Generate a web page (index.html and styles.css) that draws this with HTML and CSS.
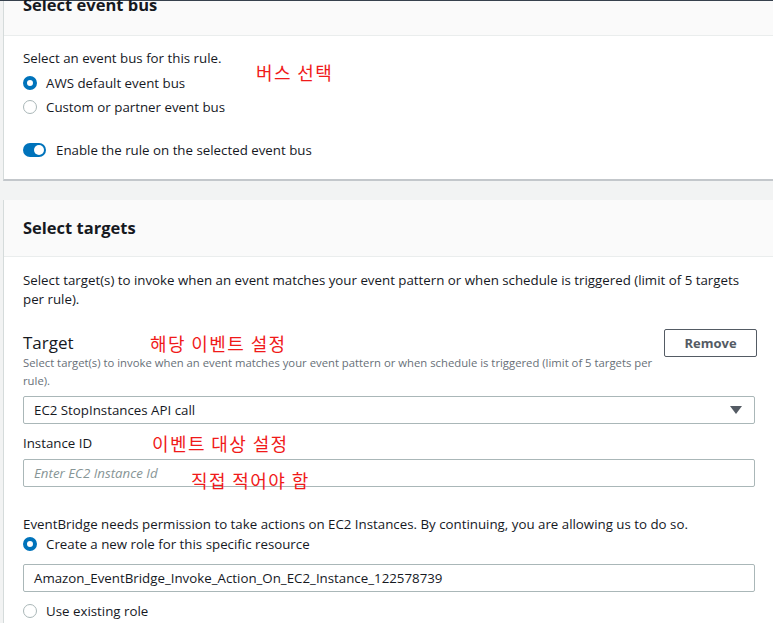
FILE: index.html
```html
<!DOCTYPE html>
<html lang="en">
<head>
    <meta charset="UTF-8">
    <title>Select event bus / Select targets</title>
    <link rel="stylesheet" href="styles.css">
</head>
<body>
    <div class="topline"></div>
    <div class="page">
        <div class="card card-bus">
            <div class="card-header">
                <h2>Select event bus</h2>
            </div>
            <div class="card-body bus-body">
                <p class="text">Select an event bus for this rule.</p>
                <div class="radio-group">
                    <label class="radio-row"><span class="radio checked"></span>AWS default event bus</label>
                    <label class="radio-row"><span class="radio"></span>Custom or partner event bus</label>
                </div>
                <label class="toggle-row"><span class="toggle"><span class="knob"></span></span>Enable the rule on the selected event bus</label>
                <span class="note note-bus">버스 선택</span>
            </div>
        </div>

        <div class="card card-targets">
            <div class="card-header">
                <h2>Select targets</h2>
            </div>
            <div class="card-body targets-body">
                <p class="text desc">Select target(s) to invoke when an event matches your event pattern or when schedule is triggered (limit of 5 targets per rule).</p>

                <div class="target-head">
                    <div class="target-title">
                        <h3>Target</h3>
                        <p class="small">Select target(s) to invoke when an event matches your event pattern or when schedule is triggered (limit of 5 targets per rule).</p>
                    </div>
                    <button class="btn">Remove</button>
                    <span class="note note-target">해당 이벤트 설정</span>
                </div>

                <div class="select">
                    <span>EC2 StopInstances API call</span>
                    <svg class="caret" width="12" height="8" viewBox="0 0 12 8"><polygon points="0,0 12,0 6,8" fill="#545b64"/></svg>
                </div>

                <div class="field">
                    <label class="label">Instance ID</label>
                    <span class="note note-instance">이벤트 대상 설정</span>
                </div>
                <div class="input placeholder">
                    Enter EC2 Instance Id
                    <span class="note note-input">직접 적어야 함</span>
                </div>

                <p class="text perm">EventBridge needs permission to take actions on EC2 Instances. By continuing, you are allowing us to do so.</p>
                <label class="radio-row"><span class="radio checked"></span>Create a new role for this specific resource</label>
                <div class="input role">Amazon_EventBridge_Invoke_Action_On_EC2_Instance_122578739</div>
                <label class="radio-row last"><span class="radio"></span>Use existing role</label>
            </div>
        </div>
    </div>
</body>
</html>
```

FILE: styles.css
```css
body {
    margin: 0;
    background-color: #f2f3f3;
    font-family: "Open Sans", "Noto Sans", sans-serif;
    font-size: 13.3px;
    color: #16191f;
    overflow: hidden;
}

.topline {
    height: 1px;
    background-color: #37414d;
}

.page {
    padding-left: 3px;
    margin-right: -1px;
}

.card {
    background-color: #fff;
    border-left: 1px solid #d5dbdb;
    border-bottom: 2px solid #c3c7cb;
}

.card-header {
    background-color: #fafafa;
    border-bottom: 1px solid #eaeded;
    padding: 0 19px;
    display: flow-root;
}

.card-header h2 {
    margin: 0;
    font-size: 16.5px;
    font-weight: 700;
    line-height: 22px;
}

.card-bus .card-header {
    height: 34px;
}

.card-bus .card-header h2 {
    margin-top: -7px;
}

.card-targets {
    margin-top: 19px;
}

.card-targets .card-header {
    height: 56px;
    display: flex;
    align-items: center;
}

.card-body {
    position: relative;
    padding: 0 19px;
}

.text {
    margin: 0;
    line-height: 20px;
}

.bus-body {
    padding-top: 12px;
    padding-bottom: 18px;
}

.radio-group {
    margin-top: 3px;
}

.radio-row {
    display: flex;
    align-items: center;
    height: 24px;
}

.radio {
    width: 14px;
    height: 14px;
    box-sizing: border-box;
    border: 1.5px solid #aab7b8;
    border-radius: 50%;
    margin-right: 9px;
    background-color: #fff;
}

.radio.checked {
    border: 4px solid #0073bb;
}

.toggle-row {
    display: flex;
    align-items: center;
    height: 22px;
    margin-top: 20px;
}

.toggle {
    width: 23px;
    height: 14px;
    border-radius: 7px;
    background-color: #0073bb;
    margin-right: 10px;
    position: relative;
}

.knob {
    position: absolute;
    right: 2px;
    top: 2px;
    width: 10px;
    height: 10px;
    border-radius: 50%;
    background-color: #fff;
}

/* red annotations pasted over the screenshot */
.note {
    position: absolute;
    color: #f01a1a;
    font-family: "Noto Sans CJK KR", sans-serif;
    font-size: 18px;
    letter-spacing: 1.4px;
    line-height: 22px;
    white-space: nowrap;
    font-style: normal;
}

.note-bus {
    left: 252px;
    top: 25px;
}

.targets-body {
    padding-top: 14px;
    padding-bottom: 20px;
}

.desc {
    line-height: 19px;
}

.target-head {
    position: relative;
    display: flex;
    justify-content: space-between;
    align-items: flex-start;
    margin-top: 20px;
}

.target-title {
    width: 640px;
}

.target-title h3 {
    margin: 3px 0 0;
    font-size: 17px;
    font-weight: 400;
    line-height: 22px;
}

.small {
    margin: 0;
    font-size: 11.3px;
    line-height: 18px;
    color: #687078;
}

.btn {
    width: 93px;
    height: 28px;
    margin-right: -2px;
    border: 1px solid #545b64;
    border-radius: 2px;
    background-color: #fff;
    color: #545b64;
    font-family: inherit;
    font-size: 13px;
    font-weight: 700;
}

.note-target {
    left: 127px;
    top: 3px;
}

.select,
.input {
    position: relative;
    height: 28px;
    box-sizing: border-box;
    border: 1px solid #aab7b8;
    border-radius: 2px;
    display: flex;
    align-items: center;
    padding: 0 10px;
}

.select {
    margin-top: 6px;
    justify-content: space-between;
}

.caret {
    margin-right: 2px;
}

.field {
    position: relative;
    margin-top: 9px;
}

.label {
    display: block;
    line-height: 20px;
}

.note-instance {
    left: 129px;
    top: -1px;
}

.input {
    margin-top: 6px;
}

.placeholder {
    color: #879596;
    font-style: italic;
}

.note-input {
    left: 167px;
    top: 9px;
}

.perm {
    margin-top: 28px;
    line-height: 18px;
}

.perm + .radio-row {
    height: 22px;
}

.role {
    margin-top: 9px;
}

.radio-row.last {
    height: 22px;
    margin-top: 8px;
}
```
